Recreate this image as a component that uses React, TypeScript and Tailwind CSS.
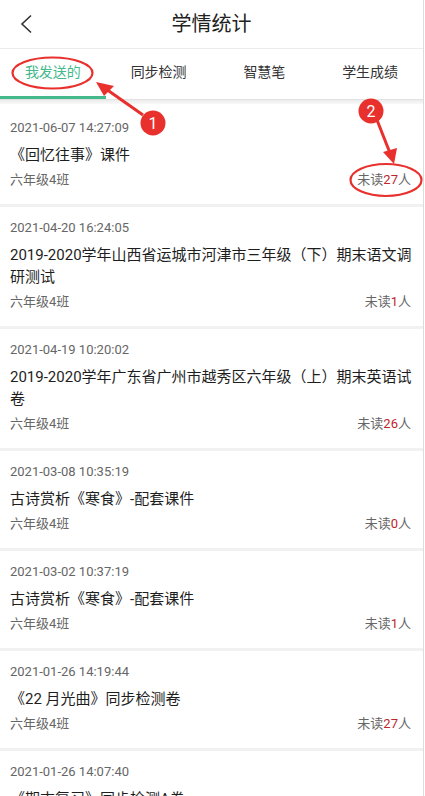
import React from "react";

type Item = { time: string; title: string; cls: string; unread: number };

const items: Item[] = [
  { time: "2021-06-07 14:27:09", title: "《回忆往事》课件", cls: "六年级4班", unread: 27 },
  { time: "2021-04-20 16:24:05", title: "2019-2020学年山西省运城市河津市三年级（下）期末语文调研测试", cls: "六年级4班", unread: 1 },
  { time: "2021-04-19 10:20:02", title: "2019-2020学年广东省广州市越秀区六年级（上）期末英语试卷", cls: "六年级4班", unread: 26 },
  { time: "2021-03-08 10:35:19", title: "古诗赏析《寒食》-配套课件", cls: "六年级4班", unread: 0 },
  { time: "2021-03-02 10:37:19", title: "古诗赏析《寒食》-配套课件", cls: "六年级4班", unread: 1 },
  { time: "2021-01-26 14:19:44", title: "《22 月光曲》同步检测卷", cls: "六年级4班", unread: 27 },
  { time: "2021-01-26 14:07:40", title: "《期末复习》同步检测A卷", cls: "六年级4班", unread: 27 },
];

const tabs = ["我发送的", "同步检测", "智慧笔", "学生成绩"];

export default function App() {
  return (
    <div
      className="relative w-[425px] h-[796px] overflow-hidden bg-white"
      style={{ fontFamily: "Roboto, 'Noto Sans CJK SC', sans-serif" }}
    >
      <div className="w-[424px] border-r border-[#dcdcdc] min-h-[796px]">
        {/* Header */}
        <div className="relative h-[49px] flex items-center justify-center border-b border-[#ececec]">
          <svg className="absolute left-[18px] top-[14px]" width="16" height="20" viewBox="0 0 16 20">
            <path d="M13 1.5 L4 10 L13 18.5" fill="none" stroke="#333" strokeWidth="1.6" />
          </svg>
          <span className="text-[20px] text-[#222] leading-none">学情统计</span>
        </div>
        {/* Tabs */}
        <div className="flex h-[51px] border-b border-[#e2e2e2]">
          {tabs.map((t, i) => (
            <div key={t} className="flex-1 flex flex-col">
              <div
                className={`flex-1 flex items-center justify-center text-[14px] ${
                  i === 0 ? "text-[#43b98c]" : "text-[#333]"
                }`}
              >
                {t}
              </div>
              <div className={`h-[3px] ${i === 0 ? "bg-[#43b98c]" : "bg-transparent"}`} />
            </div>
          ))}
        </div>
        <div className="h-[4px] bg-gradient-to-b from-[#ececec] to-[#f9f9f9]" />
        {/* List */}
        <div className="flex flex-col">
          {items.map((it, i) => (
            <div key={i} className="flex flex-col">
              <div className={`${i === 0 ? "pt-[14px]" : "pt-[11px]"} pb-[14px] pl-[10px] pr-[12px]`}>
                <div className="h-[20px] leading-[20px] text-[13px] text-[#666]">{it.time}</div>
                <div className="mt-[6px] -mr-[10px] text-[15px] leading-[22px] text-[#1e1e1e]">{it.title}</div>
                <div className="mt-[4px] h-[20px] leading-[20px] flex justify-between text-[13px] text-[#666]">
                  <span>{it.cls}</span>
                  <span>
                    未读<span className="text-[#c0242c]">{it.unread}</span>人
                  </span>
                </div>
              </div>
              <div className="h-[3px] bg-[#f1f1f1]" />
            </div>
          ))}
        </div>
      </div>

      {/* Annotations overlay */}
      <svg
        className="absolute left-0 top-0 pointer-events-none"
        width="425"
        height="796"
        viewBox="0 0 425 796"
      >
        <ellipse cx="52.5" cy="73" rx="40" ry="15.5" fill="none" stroke="#e8302c" strokeWidth="2.2" />
        <line x1="143" y1="115" x2="106" y2="89" stroke="#e8302c" strokeWidth="3" />
        <polygon points="96,82 114,86 104,96" fill="#e8302c" />
        <circle cx="153" cy="123" r="12.5" fill="#e8302c" />
        <text x="153" y="129" textAnchor="middle" fill="#fff" fontSize="16" fontFamily="Roboto, sans-serif">1</text>

        <ellipse cx="386" cy="180" rx="35.5" ry="16" fill="none" stroke="#e8302c" strokeWidth="2.2" />
        <line x1="377" y1="120" x2="390" y2="153" stroke="#e8302c" strokeWidth="3" />
        <polygon points="394,164 383,152 397,148" fill="#e8302c" />
        <circle cx="371" cy="111" r="12.5" fill="#e8302c" />
        <text x="371" y="117" textAnchor="middle" fill="#fff" fontSize="16" fontFamily="Roboto, sans-serif">2</text>
      </svg>
    </div>
  );
}
